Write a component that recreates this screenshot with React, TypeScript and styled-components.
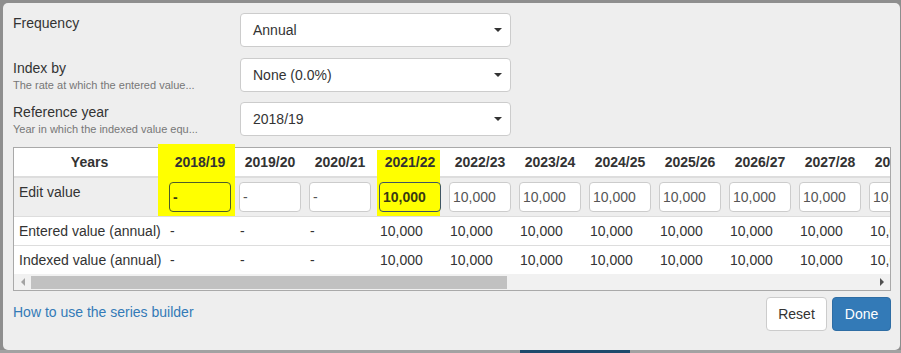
import React from 'react';
import styled, { createGlobalStyle, css } from 'styled-components';

const GlobalStyle = createGlobalStyle`
  html, body { margin: 0; padding: 0; }
  body {
    background: #8e8e8e;
    font-family: "Liberation Sans", Arial, sans-serif;
    font-size: 14px;
    color: #333;
  }
  * { box-sizing: border-box; }
`;

const Page = styled.div`
  height: 353px;
  padding: 3px 1px 0 3px;
  overflow: hidden;
  background:
    linear-gradient(to right, #a2a2a2 0, #a2a2a2 520px, #1e4a6c 520px, #1e4a6c 630px, #a2a2a2 630px) left bottom / 100% 3px no-repeat,
    #8e8e8e;
`;

const Modal = styled.div`
  width: 897px;
  height: 347px;
  background: #eeeeee;
  border-radius: 5px;
  padding: 10px 9px 0 10px;
  display: flex;
  flex-direction: column;
`;

const FormRow = styled.div`
  display: flex;
  align-items: flex-start;
  margin-bottom: 10.5px;
  &:last-of-type { margin-bottom: 11px; }
`;

const LabelCol = styled.div`
  width: 227px;
  display: flex;
  flex-direction: column;
`;

const Label = styled.div`
  font-size: 14px;
  line-height: 20px;
  color: #333;
`;

const Help = styled.div`
  font-size: 11px;
  line-height: 14px;
  color: #777;
  white-space: nowrap;
`;

const Select = styled.div`
  width: 271px;
  height: 34px;
  background: #fff;
  border: 1px solid #ccc;
  border-radius: 4px;
  padding: 6px 8px 6px 12px;
  line-height: 20px;
  color: #333;
  display: flex;
  align-items: center;
  justify-content: space-between;
`;

const Caret = styled.span`
  width: 0;
  height: 0;
  border-top: 4px solid #333;
  border-left: 4px solid transparent;
  border-right: 4px solid transparent;
`;

const TableBox = styled.div`
  width: 878px;
  border: 1px solid #a9a9a9;
  background: #fff;
`;

const Viewport = styled.div`
  clip-path: inset(-6px 0 0 0);
`;

const Table = styled.table`
  border-collapse: separate;
  border-spacing: 0;
  table-layout: fixed;
`;

type HL = 'wide' | 'narrow' | undefined;

const hlBefore = (hl: HL, head: boolean) =>
  hl &&
  css`
    position: relative;
    &::before {
      content: '';
      position: absolute;
      background: #ffff00;
      left: ${hl === 'wide' ? '-7px' : '2px'};
      right: ${hl === 'wide' ? '0' : '5px'};
      top: ${head ? (hl === 'wide' ? '-4px' : '2px') : '0'};
      bottom: ${head ? '-2px' : '0'};
    }
  `;

const HeadCell = styled.th<{ $hl?: HL }>`
  padding: 4px 5px;
  line-height: 20px;
  background: #fff;
  border-bottom: 2px solid #ddd;
  text-align: center;
  font-weight: bold;
  color: #333;
  white-space: nowrap;
  ${(p) => hlBefore(p.$hl, true)}
`;

const Raised = styled.span`
  position: relative;
`;

const EditCell = styled.td<{ $hl?: HL; $label?: boolean }>`
  padding: ${(p) => (p.$label ? '4px 5px' : '4px')};
  line-height: 20px;
  background: #eeeeee;
  border-bottom: 1px solid #ddd;
  vertical-align: top;
  white-space: nowrap;
  ${(p) => hlBefore(p.$hl, false)}
`;

const ValueInput = styled.div<{ $hl?: HL }>`
  position: relative;
  width: 62px;
  height: 30px;
  border: 1px solid #ccc;
  border-radius: 4px;
  background: #fff;
  padding: 0 3px;
  line-height: 28px;
  font-size: 14px;
  color: #555;
  white-space: nowrap;
  overflow: hidden;
  ${(p) =>
    p.$hl &&
    css`
      background: #ffff00;
      border-color: ${p.$hl === 'wide' ? '#4d5d2a' : '#3f5563'};
      color: #3a3a12;
      font-weight: bold;
    `}
`;

const BodyCell = styled.td<{ $last?: boolean }>`
  padding: 4px 5px;
  line-height: 20px;
  background: #fff;
  border-bottom: ${(p) => (p.$last ? 'none' : '1px solid #ddd')};
  vertical-align: top;
  white-space: nowrap;
  color: #333;
`;

const Scrollbar = styled.div`
  height: 16px;
  background: #f1f1f1;
  display: flex;
  align-items: flex-start;
`;

const ArrowBtn = styled.div<{ $dir: 'left' | 'right' }>`
  width: 17px;
  height: 16px;
  display: flex;
  align-items: center;
  justify-content: center;
  &::after {
    content: '';
    width: 0;
    height: 0;
    border-top: 4px solid transparent;
    border-bottom: 4px solid transparent;
    ${(p) =>
      p.$dir === 'left'
        ? css`border-right: 4px solid #a3a3a3;`
        : css`border-left: 4px solid #505050;`}
  }
`;

const Thumb = styled.div`
  width: 476px;
  height: 13px;
  margin-top: 2px;
  background: #c1c1c1;
`;

const Spacer = styled.div`
  flex: 1;
`;

const Footer = styled.div`
  display: flex;
  justify-content: space-between;
  align-items: flex-start;
  margin-top: 6px;
`;

const HelpLink = styled.a`
  color: #337ab7;
  text-decoration: none;
  line-height: 20px;
  margin-top: 5px;
`;

const Buttons = styled.div`
  display: flex;
  gap: 5px;
`;

const Button = styled.button<{ $primary?: boolean }>`
  width: ${(p) => (p.$primary ? '59px' : '61px')};
  height: 34px;
  padding: 6px 0;
  text-align: center;
  font-family: "Liberation Sans", Arial, sans-serif;
  font-size: 14px;
  line-height: 20px;
  border-radius: 4px;
  border: 1px solid ${(p) => (p.$primary ? '#2e6da4' : '#ccc')};
  background: ${(p) => (p.$primary ? '#337ab7' : '#fff')};
  color: ${(p) => (p.$primary ? '#fff' : '#333')};
`;

const years: string[] = [];
for (let y = 2018; y < 2034; y++) {
  years.push(`${y}/${String((y + 1) % 100).padStart(2, '0')}`);
}

const highlightOf = (i: number): HL => (i === 0 ? 'wide' : i === 3 ? 'narrow' : undefined);
const valueOf = (i: number) => (i < 3 ? '-' : '10,000');

export default function App() {
  return (
    <>
      <GlobalStyle />
      <Page>
        <Modal>
          <FormRow>
            <LabelCol>
              <Label>Frequency</Label>
            </LabelCol>
            <Select>
              Annual
              <Caret />
            </Select>
          </FormRow>
          <FormRow>
            <LabelCol>
              <Label>Index by</Label>
              <Help>The rate at which the entered value...</Help>
            </LabelCol>
            <Select>
              None (0.0%)
              <Caret />
            </Select>
          </FormRow>
          <FormRow>
            <LabelCol>
              <Label>Reference year</Label>
              <Help>Year in which the indexed value equ...</Help>
            </LabelCol>
            <Select>
              2018/19
              <Caret />
            </Select>
          </FormRow>

          <TableBox>
            <Viewport>
              <Table style={{ width: 151 + 70 * years.length }}>
                <colgroup>
                  <col style={{ width: 151 }} />
                  {years.map((y) => (
                    <col key={y} style={{ width: 70 }} />
                  ))}
                </colgroup>
                <thead>
                  <tr>
                    <HeadCell>Years</HeadCell>
                    {years.map((y, i) => (
                      <HeadCell key={y} $hl={highlightOf(i)}>
                        <Raised>{y}</Raised>
                      </HeadCell>
                    ))}
                  </tr>
                </thead>
                <tbody>
                  <tr>
                    <EditCell $label>Edit value</EditCell>
                    {years.map((y, i) => (
                      <EditCell key={y} $hl={highlightOf(i)}>
                        <ValueInput $hl={highlightOf(i)}>{valueOf(i)}</ValueInput>
                      </EditCell>
                    ))}
                  </tr>
                  <tr>
                    <BodyCell>Entered value (annual)</BodyCell>
                    {years.map((y, i) => (
                      <BodyCell key={y}>{valueOf(i)}</BodyCell>
                    ))}
                  </tr>
                  <tr>
                    <BodyCell $last>Indexed value (annual)</BodyCell>
                    {years.map((y, i) => (
                      <BodyCell key={y} $last>
                        {valueOf(i)}
                      </BodyCell>
                    ))}
                  </tr>
                </tbody>
              </Table>
            </Viewport>
            <Scrollbar>
              <ArrowBtn $dir="left" />
              <Thumb />
              <Spacer />
              <ArrowBtn $dir="right" />
            </Scrollbar>
          </TableBox>

          <Footer>
            <HelpLink href="#">How to use the series builder</HelpLink>
            <Buttons>
              <Button>Reset</Button>
              <Button $primary>Done</Button>
            </Buttons>
          </Footer>
        </Modal>
      </Page>
    </>
  );
}
